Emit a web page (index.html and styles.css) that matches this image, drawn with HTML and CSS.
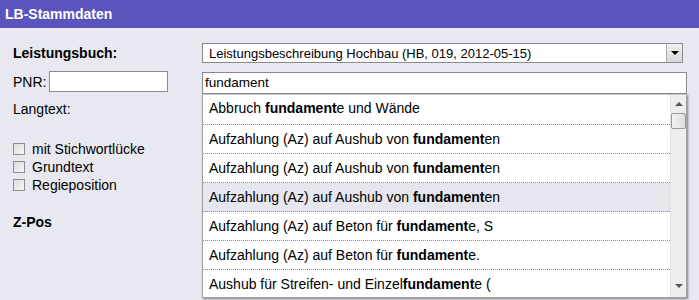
FILE: index.html
```html
<!DOCTYPE html>
<html lang="de">
<head>
  <meta charset="UTF-8" />
  <title>LB-Stammdaten</title>
  <link rel="stylesheet" href="styles.css">
</head>
<body>
  <div class="panel-head">LB-Stammdaten</div>

  <div class="panel-body">
    <div class="left-col">
      <div class="field-label bold">Leistungsbuch:</div>
      <div class="pnr-row">
        <span>PNR:</span>
        <input type="text" class="pnr-input" />
      </div>
      <div class="langtext">Langtext:</div>

      <div class="check-list">
        <label class="check-item"><span class="box"></span>mit Stichwortlücke</label>
        <label class="check-item"><span class="box"></span>Grundtext</label>
        <label class="check-item"><span class="box"></span>Regieposition</label>
      </div>

      <div class="zpos bold">Z-Pos</div>
    </div>

    <div class="right-col">
      <div class="lb-select">
        <span class="select-text">Leistungsbeschreibung Hochbau (HB, 019, 2012-05-15)</span>
        <span class="select-btn"><span class="arrow-down"></span></span>
      </div>

      <div class="search-input">fundament</div>

      <div class="suggest-box">
        <ul class="suggest-list">
          <li>Abbruch <b>fundament</b>e und Wände</li>
          <li>Aufzahlung (Az) auf Aushub von <b>fundament</b>en</li>
          <li>Aufzahlung (Az) auf Aushub von <b>fundament</b>en</li>
          <li class="hover">Aufzahlung (Az) auf Aushub von <b>fundament</b>en</li>
          <li>Aufzahlung (Az) auf Beton für <b>fundament</b>e, S</li>
          <li>Aufzahlung (Az) auf Beton für <b>fundament</b>e.</li>
          <li>Aushub für Streifen- und Einzel<b>fundament</b>e (</li>
        </ul>
        <div class="fake-scroll">
          <span class="scroll-up"></span>
          <span class="scroll-thumb"></span>
          <span class="scroll-space"></span>
          <span class="scroll-down"></span>
        </div>
      </div>
    </div>
  </div>
</body>
</html>
```

FILE: styles.css
```css
* {
  box-sizing: border-box;
}

body {
  margin: 0;
  height: 300px;
  overflow: hidden;
  background: #e8e8f0;
  font-family: 'Liberation Sans', Arial, sans-serif;
  font-size: 14px;
  color: #000;
}

.bold {
  font-weight: bold;
}

.panel-head {
  height: 28px;
  padding: 6px 5px 0;
  background: #5b54bd;
  color: #fff;
  font-weight: bold;
  font-size: 14px;
}

.panel-body {
  display: flex;
  padding-top: 15px;
}

.left-col {
  width: 202px;
  padding-left: 13px;
}

.field-label {
  height: 28px;
  padding-top: 2px;
}

.pnr-row {
  display: flex;
  align-items: center;
  gap: 3px;
  height: 21px;
}

.pnr-input {
  width: 119px;
  height: 21px;
  border: 1px solid #8c8c8c;
  background: #fff;
  margin: 0;
}

.langtext {
  margin-top: 9px;
  height: 16px;
}

.check-list {
  margin-top: 25px;
  display: flex;
  flex-direction: column;
  gap: 5px;
}

.check-item {
  display: flex;
  align-items: center;
  gap: 7px;
  height: 13px;
}

.box {
  width: 12px;
  height: 12px;
  border: 1px solid #8d8d8d;
  background: linear-gradient(135deg, #dcdcdc, #f6f6f6);
}

.zpos {
  margin-top: 23px;
}

.right-col {
  width: 485px;
}

.lb-select {
  display: flex;
  width: 481px;
  height: 20px;
  border: 1px solid #8a8a8a;
  background: #fff;
  font-size: 13px;
}

.select-text {
  flex: 1;
  padding: 2px 0 0 6px;
}

.select-btn {
  width: 16px;
  display: flex;
  align-items: center;
  justify-content: center;
  background: linear-gradient(#f2f2f2, #d6d6d6);
  border-left: 1px solid #a8a8a8;
}

.arrow-down {
  border-left: 4px solid transparent;
  border-right: 4px solid transparent;
  border-top: 4px solid #000;
}

.search-input {
  margin-top: 9px;
  height: 22px;
  border: 1px solid #8a8a8a;
  background: #fff;
  padding: 2px 0 0 2px;
  font-size: 13.5px;
}

.suggest-box {
  display: flex;
  height: 204px;
  border: 1px solid #a0a0a0;
  border-top-color: #c8c8c8;
  background: #fff;
  box-shadow: 1px 1px 2px rgba(0, 0, 0, 0.45);
  overflow: hidden;
}

.suggest-list {
  flex: 1;
  margin: 0;
  padding: 0;
  list-style: none;
}

.suggest-list li {
  height: 29px;
  padding: 6px 0 0 6px;
  border-bottom: 1px dotted #8a8a8a;
  white-space: nowrap;
}

.suggest-list li:first-child {
  height: 30px;
  padding-top: 5px;
}

.suggest-list li.hover {
  background: #e6e6ee;
}

.fake-scroll {
  width: 16px;
  display: flex;
  flex-direction: column;
  align-items: center;
  background: #eeeeee;
  border-left: 1px solid #e2e2e2;
}

.scroll-up {
  margin-top: 7px;
  border-left: 4px solid transparent;
  border-right: 4px solid transparent;
  border-bottom: 4px solid #555;
}

.scroll-thumb {
  margin-top: 7px;
  width: 15px;
  height: 16px;
  border: 1px solid #9a9a9a;
  border-radius: 2px;
  background: linear-gradient(90deg, #f4f4f4, #dcdcdc);
}

.scroll-space {
  flex: 1;
}

.scroll-down {
  margin-bottom: 9px;
  border-left: 4px solid transparent;
  border-right: 4px solid transparent;
  border-top: 4px solid #555;
}
```
